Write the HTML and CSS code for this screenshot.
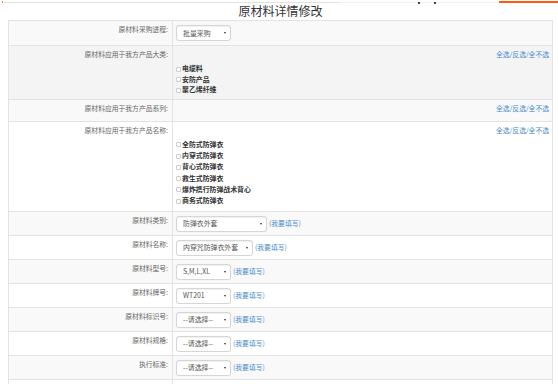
FILE: index.html
```html
<!DOCTYPE html>
<html lang="zh-CN">
<head>
<meta charset="utf-8">
<title>原材料详情修改</title>
<link rel="stylesheet" href="styles.css">
</head>
<body>
<div class="topbar">
  <span class="tb-dot"></span>
  <span class="tb1"></span>
  <span class="tb2"><i class="mk mk1"></i><i class="mk mk2"></i></span>
  <span class="tb3"></span>
</div>
<div class="wrap">
  <h1 class="title">原材料详情修改</h1>
  <table class="form">
    <colgroup><col class="c1"><col></colgroup>
    <tr class="stripe">
      <td class="lbl">原材料采购进程:</td>
      <td><div class="field"><div class="sel w55"><span>批量采购</span><i class="caret"></i></div></div></td>
    </tr>
    <tr class="hover">
      <td class="lbl">原材料应用于我方产品大类:</td>
      <td>
        <div class="links"><a>全选</a>/<a>反选</a>/<a>全不选</a></div>
        <ul class="checks l2">
          <li><span class="cb"></span>电缆料</li>
          <li><span class="cb"></span>安防产品</li>
          <li><span class="cb"></span>聚乙烯纤维</li>
        </ul>
      </td>
    </tr>
    <tr class="stripe r3">
      <td class="lbl">原材料应用于我方产品系列:</td>
      <td><div class="links"><a>全选</a>/<a>反选</a>/<a>全不选</a></div></td>
    </tr>
    <tr class="r4">
      <td class="lbl">原材料应用于我方产品名称:</td>
      <td>
        <div class="links"><a>全选</a>/<a>反选</a>/<a>全不选</a></div>
        <ul class="checks l4">
          <li><span class="cb"></span>全防式防弹衣</li>
          <li><span class="cb"></span>内穿式防弹衣</li>
          <li><span class="cb"></span>背心式防弹衣</li>
          <li><span class="cb"></span>救生式防弹衣</li>
          <li><span class="cb"></span>爆炸携行防弹战术背心</li>
          <li><span class="cb"></span>商务式防弹衣</li>
        </ul>
      </td>
    </tr>
    <tr class="stripe sr">
      <td class="lbl">原材料类别:</td>
      <td><div class="field"><div class="sel w91"><span>防弹衣外套</span><i class="caret"></i></div><a class="fill">(我要填写)</a></div></td>
    </tr>
    <tr class="sr">
      <td class="lbl">原材料名称:</td>
      <td><div class="field"><div class="sel w77"><span>内穿咒防弹衣外套</span><i class="caret"></i></div><a class="fill">(我要填写)</a></div></td>
    </tr>
    <tr class="stripe sr">
      <td class="lbl">原材料型号:</td>
      <td><div class="field"><div class="sel w55"><span>S,M,L,XL</span><i class="caret"></i></div><a class="fill">(我要填写)</a></div></td>
    </tr>
    <tr class="sr">
      <td class="lbl">原材料牌号:</td>
      <td><div class="field"><div class="sel w55"><span>WT201</span><i class="caret"></i></div><a class="fill">(我要填写)</a></div></td>
    </tr>
    <tr class="stripe sr">
      <td class="lbl">原材料标识号:</td>
      <td><div class="field"><div class="sel w55"><span>--请选择--</span><i class="caret"></i></div><a class="fill">(我要填写)</a></div></td>
    </tr>
    <tr class="sr">
      <td class="lbl">原材料规格:</td>
      <td><div class="field"><div class="sel w55"><span>--请选择--</span><i class="caret"></i></div><a class="fill">(我要填写)</a></div></td>
    </tr>
    <tr class="stripe sr">
      <td class="lbl">执行标准:</td>
      <td><div class="field"><div class="sel w55"><span>--请选择--</span><i class="caret"></i></div><a class="fill">(我要填写)</a></div></td>
    </tr>
    <tr class="sr">
      <td class="lbl"></td>
      <td><div class="field"><div class="blank"></div></div></td>
    </tr>
  </table>
</div>
</body>
</html>
```
FILE: styles.css
```css
html, body {
  margin: 0;
  padding: 0;
  background: #fff;
}
body {
  font-family: "Noto Sans CJK SC", "Noto Sans", sans-serif;
  color: #666;
}
.topbar {
  display: flex;
  height: 3px;
}
.tb-dot {
  width: 1px;
  height: 2px;
  margin: 1px 1px 0 2px;
  background: #ff7a2a;
}
.tb1 {
  width: 336px;
  height: 1px;
  margin-top: 2px;
  background: #e2e2e2;
}
.tb2 {
  display: flex;
  width: 159px;
  height: 1px;
  margin-top: 2px;
  background: #edf3f3;
}
.mk {
  display: block;
  width: 2px;
  height: 2px;
  background: #444;
}
.mk1 { margin-left: 78px; }
.mk2 { margin-left: 14px; }
.tb3 {
  width: 59px;
  height: 2px;
  margin-top: 1px;
  background: #ff5a10;
}
.wrap {
  padding: 0 5px 0 8px;
}
.title {
  margin: 0 0 2px;
  font-size: 12px;
  line-height: 15px;
  font-weight: normal;
  text-align: center;
  color: #333;
}
.form {
  width: 545px;
  border-collapse: collapse;
  table-layout: fixed;
}
.c1 { width: 164px; }
.form td {
  border: 1px solid #e3e3e3;
  padding: 3px 3px 4px 3px;
  vertical-align: top;
  font-size: 6.8px;
  line-height: 11px;
}
.form tr.sr td {
  padding-bottom: 3px;
}
.form td.lbl {
  text-align: right;
  padding-right: 4px;
  color: #666;
}
.stripe { background: #f9f9f9; }
.hover { background: #f4f4f4; }
.r3 td { padding-bottom: 7px; }
.r4 td { padding-bottom: 4px; }
.links {
  text-align: right;
  color: #4a8ccc;
  height: 11px;
}
.links a, .fill {
  color: #4a8ccc;
  text-decoration: none;
}
.checks {
  list-style: none;
  margin: 3px 0 0;
  padding: 0;
  color: #333;
  font-weight: 700;
  font-size: 6.9px;
}
.checks.l2 li { line-height: 10.6px; }
.checks.l4 li { line-height: 11.3px; }
.cb {
  display: inline-block;
  width: 5px;
  height: 5px;
  box-sizing: border-box;
  border: 1px solid #cdcdcd;
  border-radius: 1px;
  background: #fff;
  margin-right: 1px;
  vertical-align: -0.5px;
}
.field {
  display: flex;
  align-items: center;
  gap: 2px;
  margin-top: 1px;
  height: 16px;
}
.sel {
  display: flex;
  align-items: center;
  justify-content: space-between;
  box-sizing: border-box;
  height: 16px;
  border: 1px solid #d6d6d6;
  border-radius: 3px;
  background: #fff;
  box-shadow: inset 0 1px 1px rgba(0,0,0,.06), 0 0 1px rgba(0,0,0,.08);
  padding: 0 4px 0 6px;
  color: #555;
  font-size: 6.9px;
  white-space: nowrap;
}
.w55 { width: 55px; }
.w77 { width: 77px; }
.w91 { width: 91px; }
.caret {
  width: 0;
  height: 0;
  border-left: 1.5px solid transparent;
  border-right: 1.5px solid transparent;
  border-top: 2px solid #333;
}
.fill {
  font-size: 6.8px;
}
.blank {
  height: 16px;
}
```
